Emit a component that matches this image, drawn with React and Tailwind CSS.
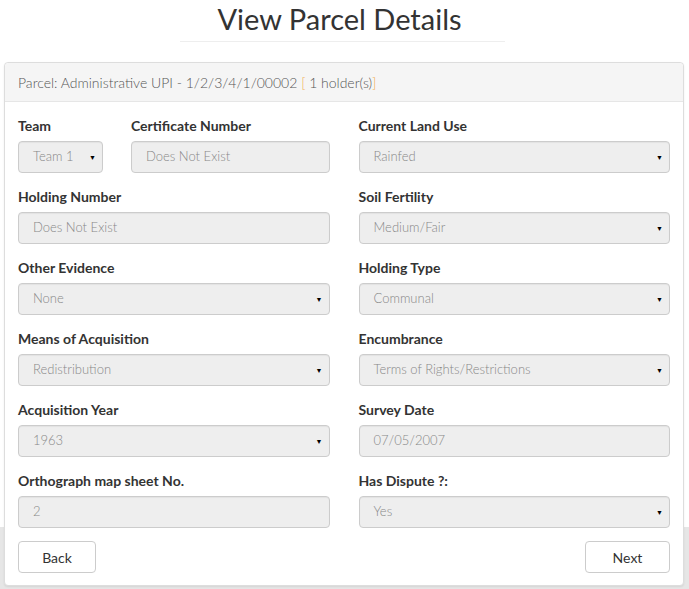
import React from 'react';

const Caret = () => (
  <span className="absolute right-[6px] top-1/2 -translate-y-1/2 text-[7px] text-black leading-none">▼</span>
);

const Field = ({ label, value, select, className = '' }) => (
  <div className={`mb-[14px] ${className}`}>
    <div className="text-[14px] font-bold text-[#333] leading-[20px] mb-[5px]">{label}</div>
    <div className="relative h-[32px] rounded-[4px] border border-[#ccc] bg-[#eee] flex items-center pl-[14px] text-[13px] font-light text-[#888] shadow-[inset_0_1px_1px_rgba(0,0,0,0.05)]">
      {value}
      {select && <Caret />}
    </div>
  </div>
);

const App = () => {
  const left = [
    { label: 'Holding Number', value: 'Does Not Exist' },
    { label: 'Other Evidence', value: 'None', select: true },
    { label: 'Means of Acquisition', value: 'Redistribution', select: true },
    { label: 'Acquisition Year', value: '1963', select: true },
    { label: 'Orthograph map sheet No.', value: '2' },
  ];
  const right = [
    { label: 'Current Land Use', value: 'Rainfed', select: true },
    { label: 'Soil Fertility', value: 'Medium/Fair', select: true },
    { label: 'Holding Type', value: 'Communal', select: true },
    { label: 'Encumbrance', value: 'Terms of Rights/Restrictions', select: true },
    { label: 'Survey Date', value: '07/05/2007' },
    { label: 'Has Dispute ?:', value: 'Yes', select: true },
  ];

  return (
    <div
      className="min-h-screen bg-[linear-gradient(to_bottom,#ffffff_527px,#e6e6e6_527px)] text-[#333]"
      style={{ fontFamily: 'Lato, "Open Sans", sans-serif' }}
    >
      {/* Title */}
      <div className="flex flex-col items-center pt-[1px] pr-[4px]">
        <h1 className="text-[29px] leading-[36px] font-normal text-[#333] pr-[6px]">View Parcel Details</h1>
        <div className="w-[325px] h-px bg-[#eee] mt-[4px]"></div>
      </div>

      {/* Panel */}
      <div className="ml-[4px] w-[680px] mt-[20px] bg-white border border-[#ddd] rounded-[4px] shadow-[0_1px_2px_rgba(0,0,0,0.08)]">
        <div className="bg-[#f5f5f5] border-b border-[#e6e6e6] rounded-t-[4px] px-[13px] h-[39px] flex items-center text-[14px] font-light text-[#555]">
          Parcel: Administrative UPI - 1/2/3/4/1/00002&nbsp;<span className="text-[#f0ad4e]">[</span>&nbsp;1 holder(s)<span className="text-[#f0ad4e]">]</span>
        </div>

        <div className="px-[13px] pt-[14px] pb-[12px]">
          <div className="grid grid-cols-2 gap-x-[29px]">
            <div>
              <div className="flex gap-[28px]">
                <Field label="Team" value="Team 1" select className="w-[85px]" />
                <Field label="Certificate Number" value="Does Not Exist" className="flex-1" />
              </div>
              {left.map((f, i) => (
                <Field key={i} {...f} />
              ))}
            </div>
            <div>
              {right.map((f, i) => (
                <Field key={i} {...f} />
              ))}
            </div>
          </div>

          <div className="flex justify-between -mt-px">
            <button className="w-[78px] h-[32px] rounded-[4px] border border-[#ccc] bg-white text-[14px] text-[#333]">Back</button>
            <button className="w-[85px] h-[32px] rounded-[4px] border border-[#ccc] bg-white text-[14px] text-[#333]">Next</button>
          </div>
        </div>
      </div>
    </div>
  );
};

export default App;
